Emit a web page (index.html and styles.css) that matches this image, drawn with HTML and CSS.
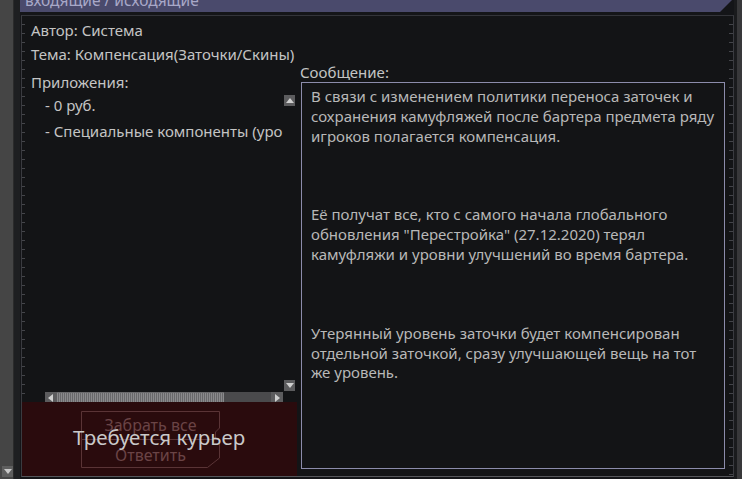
FILE: index.html
```html
<!DOCTYPE html>
<html>
<head>
    <meta charset="UTF-8">
    <title>Почта</title>
    <link rel="stylesheet" href="styles.css">
</head>
<body>
    <div class="side-strip">
        <div class="strip-arrow"></div>
    </div>
    <div class="strip-gap"></div>

    <div class="panel">
        <div class="tabs">
            <span class="tabs-text">входящие / исходящие</span>
        </div>

        <div class="frame">
            <div class="info-line">Автор: Система</div>
            <div class="info-line">Тема: Компенсация(Заточки/Скины)</div>

            <div class="columns">
                <div class="left-col">
                    <div class="label attach-label">Приложения:</div>
                    <div class="attach-list">
                        <div class="attach-items">
                            <div class="attach-item">- 0 руб.</div>
                            <div class="attach-item">- Специальные компоненты (уровень 1)</div>
                        </div>
                        <div class="vscroll">
                            <div class="sbtn sbtn-up"></div>
                            <div class="sbtn sbtn-down"></div>
                        </div>
                    </div>
                    <div class="hscroll">
                        <div class="sbtn sbtn-left"></div>
                        <div class="hthumb"></div>
                        <div class="htrack"></div>
                        <div class="sbtn sbtn-right"></div>
                    </div>
                    <div class="courier">
                        <svg class="btn-outline" width="141" height="58" viewBox="0 0 141 58">
                            <path d="M0.5 0.5 H138.5 V17 L134.5 21 V28.5 H0.5 Z" fill="none" stroke="#5a3436" stroke-width="1"/>
                            <path d="M0.5 28.5 H138.5 V47 L126.5 56.5 H0.5 Z" fill="none" stroke="#5a3436" stroke-width="1"/>
                        </svg>
                        <div class="btn-label btn-take">Забрать все</div>
                        <div class="btn-label btn-reply">Ответить</div>
                        <div class="courier-text">Требуется курьер</div>
                    </div>
                </div>

                <div class="right-col">
                    <div class="label msg-label">Сообщение:</div>
                    <div class="msg-box">
                        <p>В связи с изменением политики переноса заточек и сохранения камуфляжей после бартера предмета ряду игроков полагается компенсация.</p>
                        <p>Её получат все, кто с самого начала глобального обновления "Перестройка" (27.12.2020) терял камуфляжи и уровни улучшений во время бартера.</p>
                        <p>Утерянный уровень заточки будет компенсирован отдельной заточкой, сразу улучшающей вещь на тот же уровень.</p>
                    </div>
                </div>
            </div>
        </div>
    </div>

    <div class="right-strip"></div>
</body>
</html>
```

FILE: styles.css
```css
body {
    margin: 0;
    width: 742px;
    height: 479px;
    overflow: hidden;
    display: flex;
    background: #141518;
    font-family: "Noto Sans", "Noto Sans CJK SC", sans-serif;
    font-size: 15px;
    color: #c4c4c4;
}

.side-strip {
    width: 13px;
    background: #454545;
    display: flex;
    flex-direction: column;
    justify-content: flex-end;
    padding-bottom: 2px;
    box-sizing: border-box;
}

.strip-arrow {
    width: 11px;
    height: 11px;
    margin-left: 2px;
    background: #5e5e5e;
    position: relative;
}

.strip-arrow:after {
    content: '';
    position: absolute;
    left: 2px;
    top: 3px;
    border-left: 4px solid transparent;
    border-right: 4px solid transparent;
    border-top: 5px solid #c8c8c8;
}

.strip-gap {
    width: 7px;
    background: #1e1f21;
    border-left: 1px solid #2b2b2b;
    box-sizing: border-box;
}

.panel {
    width: 714px;
    display: flex;
    flex-direction: column;
}

.tabs {
    height: 12px;
    background: #4a4a6c;
    clip-path: polygon(0 0, 100% 0, 700px 100%, 0 100%);
    overflow: hidden;
    padding-left: 5px;
    margin-right: 2px;
}

.tabs-text {
    display: block;
    margin-top: -9px;
    font-size: 15.5px;
    line-height: 18px;
    color: #a8a8c8;
}

.frame {
    flex: 1;
    margin-top: 3px;
    margin-left: 1px;
    margin-bottom: 2px;
    border-top: 1px solid #333439;
    border-left: 1px solid #3a3b40;
    border-right: 1px solid #3a3b40;
    border-bottom: 1px solid #55565a;
    padding: 2px 0 0 9px;
    display: flex;
    flex-direction: column;
    background:
        repeating-linear-gradient(to bottom, transparent 0 8px, #44454a 8px 9px) left top / 3px 100% no-repeat,
        repeating-linear-gradient(to bottom, transparent 0 8px, #44454a 8px 9px) right top / 4px 100% no-repeat,
        #131416;
}

.info-line {
    height: 24px;
    line-height: 24px;
    white-space: nowrap;
}

.columns {
    flex: 1;
    display: flex;
}

.left-col {
    width: 266px;
    margin-left: -9px;
    padding-left: 9px;
    display: flex;
    flex-direction: column;
}

.label {
    line-height: 18px;
}

.attach-label {
    margin-top: 7px;
}

.attach-list {
    flex: 1;
    display: flex;
    margin-top: 3px;
}

.attach-items {
    flex: 1;
    overflow: hidden;
    padding-left: 14px;
}

.attach-item {
    line-height: 27px;
    margin-top: 4px;
    white-space: nowrap;
}

.attach-item:first-child {
    line-height: 18px;
    margin-top: 0;
    padding-top: 2px;
}

.vscroll {
    width: 11px;
    display: flex;
    flex-direction: column;
    justify-content: space-between;
    padding-top: 1px;
    padding-bottom: 1px;
    margin-left: 1px;
    margin-right: 2px;
}

.sbtn {
    width: 11px;
    height: 11px;
    background: #5c5c5e;
    position: relative;
}

.sbtn:after {
    content: '';
    position: absolute;
}

.sbtn-up:after {
    left: 2px;
    top: 3px;
    border-left: 4px solid transparent;
    border-right: 4px solid transparent;
    border-bottom: 5px solid #cfcfcf;
}

.sbtn-down:after {
    left: 2px;
    top: 3px;
    border-left: 4px solid transparent;
    border-right: 4px solid transparent;
    border-top: 5px solid #cfcfcf;
}

.sbtn-left:after {
    left: 3px;
    top: 2px;
    border-top: 4px solid transparent;
    border-bottom: 4px solid transparent;
    border-right: 5px solid #cfcfcf;
}

.sbtn-right:after {
    left: 4px;
    top: 2px;
    border-top: 4px solid transparent;
    border-bottom: 4px solid transparent;
    border-left: 5px solid #cfcfcf;
}

.hscroll {
    display: flex;
    height: 11px;
    margin-left: 14px;
    margin-right: 14px;
}

.sbtn-left,
.sbtn-right {
    width: 12px;
}

.hthumb {
    width: 167px;
    background: repeating-linear-gradient(to right, #8a8a8c 0 1px, #68686a 1px 2px);
    border-top: 1px solid #6a6a6c;
    border-bottom: 1px solid #6a6a6c;
    box-sizing: border-box;
}

.htrack {
    flex: 1;
    background: #4a4a4c;
}

.courier {
    height: 74px;
    margin-left: -9px;
    margin-top: -1px;
    background: #2a0b0d;
    position: relative;
}

.btn-outline {
    position: absolute;
    left: 59px;
    top: 9px;
}

.btn-label {
    position: absolute;
    left: 59px;
    width: 139px;
    text-align: center;
    font-size: 16px;
    line-height: 20px;
    color: #6a4446;
}

.btn-take {
    top: 13px;
}

.btn-reply {
    top: 43px;
}

.courier-text {
    position: absolute;
    left: 51px;
    top: 20px;
    font-size: 20.5px;
    line-height: 30px;
    color: #c9c9c9;
    white-space: nowrap;
}

.right-col {
    flex: 1;
    display: flex;
    flex-direction: column;
    margin-left: 4px;
    margin-right: 8px;
}

.msg-label {
    margin-top: -3px;
    margin-left: -1px;
}

.msg-box {
    flex: 1;
    margin-top: 1px;
    margin-bottom: 7px;
    border: 1px solid #8c8cab;
    padding: 4px 6px 0 9px;
    line-height: 19.8px;
    color: #b8b8b8;
}

.msg-box p {
    margin: 0 0 59px 0;
}

.right-strip {
    flex: 1;
    background: #38383a;
    border-left: 3px solid #1a1b1d;
}
```
